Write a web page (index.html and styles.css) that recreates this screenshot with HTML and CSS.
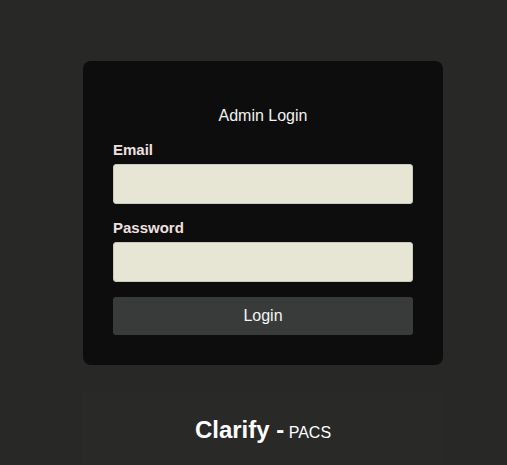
FILE: index.html
```html
<!DOCTYPE html>
<html lang="en">
<head>
    <meta charset="UTF-8">
    <meta name="viewport" content="width=device-width, initial-scale=1.0">
    <title>Clarify PACS - Admin Login</title>
    <link rel="stylesheet" href="styles.css">
</head>
<body>
    <div class="container">
        <div class="login-card">
            <h2 class="login-title">Admin Login</h2>

            <form id="loginForm">
                <div class="form-group">
                    <label for="email">Email</label>
                    <input type="email" id="email" class="form-control">
                </div>

                <div class="form-group">
                    <label for="password">Password</label>
                    <input type="password" id="password" class="form-control">
                </div>

                <button type="button" class="btn btn-login">Login</button>
            </form>
        </div>

        <div class="brand-card">
            <span class="brand-name">Clarify -</span>
            <span class="brand-sub">PACS</span>
        </div>
    </div>
</body>
</html>
```

FILE: styles.css
```css
body {
    font-family: "Liberation Sans", Arial, Helvetica, sans-serif;
    background-color: #282826;
    margin: 0;
    padding: 0;
    color: #f2f2f2;
}
.container {
    width: 360px;
    margin-left: 83px;
    padding-top: 61px;
}
.login-card {
    background-color: #0d0d0d;
    border-radius: 8px;
    padding: 45px 30px 30px;
    box-sizing: border-box;
    height: 304px;
}
.login-title {
    margin: 0 0 15px;
    font-size: 16px;
    font-weight: normal;
    text-align: center;
    color: #f2f2f2;
    line-height: 20px;
}
.form-group {
    margin-bottom: 15px;
}
.form-group label {
    display: block;
    margin-bottom: 5px;
    font-size: 15px;
    font-weight: bold;
    color: #efe0e0;
    line-height: 18px;
}
.form-control {
    display: block;
    width: 100%;
    height: 40px;
    box-sizing: border-box;
    background-color: #e7e6d4;
    border: 1px solid #c9c9c0;
    border-radius: 3px;
    font-size: 14px;
    padding: 8px;
}
.btn {
    display: block;
    width: 300px;
    height: 38px;
    border: none;
    border-radius: 3px;
    cursor: pointer;
    font-family: inherit;
    font-size: 16px;
}
.btn-login {
    background-color: #393b3b;
    color: #f4f4f4;
}
.brand-card {
    margin: 26px -2px 0;
    padding: 25px 0 21px;
    text-align: center;
    background-color: #292927;
    box-shadow: 0 0 2px rgba(0, 0, 0, 0.08);
    color: #ffffff;
}
.brand-name {
    font-size: 24px;
    font-weight: bold;
}
.brand-sub {
    font-size: 16px;
}
```
